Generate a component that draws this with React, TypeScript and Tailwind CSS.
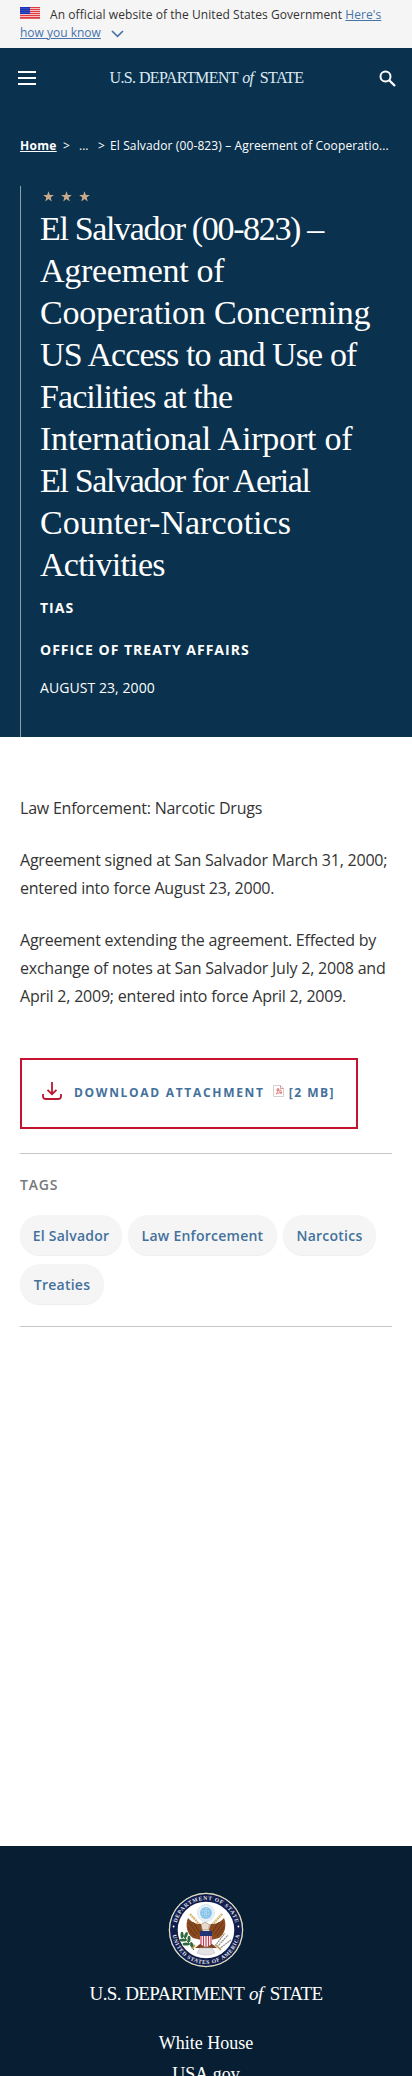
import React from 'react';

const titleLines = [
  { text: 'El Salvador (00-823) –', spacing: 'tracking-[-1.35px]' },
  { text: 'Agreement of', spacing: 'tracking-[-0.3px]' },
  { text: 'Cooperation Concerning', spacing: 'tracking-[-0.22px]' },
  { text: 'US Access to and Use of', spacing: 'tracking-[-0.9px]' },
  { text: 'Facilities at the', spacing: 'tracking-[-0.92px]' },
  { text: 'International Airport of', spacing: 'tracking-[-0.2px]' },
  { text: 'El Salvador for Aerial', spacing: 'tracking-[-1.35px]' },
  { text: 'Counter-Narcotics', spacing: 'tracking-[0.03px]' },
  { text: 'Activities', spacing: 'tracking-[-0.75px]' },
];

const tags = [
  { label: 'El Salvador', width: 'w-[102px]' },
  { label: 'Law Enforcement', width: 'w-[149px]' },
  { label: 'Narcotics', width: 'w-[93px]' },
  { label: 'Treaties', width: 'w-[84px]' },
];

function Flag() {
  return (
    <svg className="block h-3 w-5" viewBox="0 0 20 12">
      <rect width="20" height="12" fill="#f4d9dc" />
      {[0, 2, 4, 6, 8, 10].map((y) => (
        <rect key={y} y={y} width="20" height="1.15" fill="#e0393e" />
      ))}
      <rect y="11.3" width="20" height=".7" fill="#e0393e" />
      <rect width="10" height="7" fill="#1e33b1" />
      {[1, 3, 5].map((y) =>
        [1, 3, 5, 7, 9].map((x) => <circle key={`${x}-${y}`} cx={x} cy={y + 0.3} r=".4" fill="#b9c0ee" />),
      )}
    </svg>
  );
}

function Star() {
  return (
    <svg className="size-[11px]" viewBox="0 0 24 24" fill="#c9ab8c">
      <path d="M12 .5l2.9 8.2 8.8.2-7 5.3 2.5 8.5L12 17.6l-7.200 5.100 2.500-8.500-7-5.300 8.800-.2z" />
    </svg>
  );
}

function Wordmark({ large = false }: { large?: boolean }) {
  return (
    <div
      className={
        large
          ? "whitespace-nowrap font-['Liberation_Serif',serif] text-[19px] leading-6 tracking-[-0.58px] text-white"
          : "mr-[2px] whitespace-nowrap font-['Liberation_Serif',serif] text-[16px] leading-5 tracking-[-0.6px] text-[#dcebf5]"
      }
    >
      U.S. DEPARTMENT <span className="mr-[3px] ml-px italic">of</span> STATE
    </div>
  );
}

function Seal() {
  return (
    <svg className="block size-[76px] shrink-0" viewBox="0 0 76 76">
      <defs>
        <path id="seal-top" d="M7.900 38a30.100 30.100 0 0 1 60.200 0" />
        <path id="seal-bottom" d="M4.100 38a33.900 33.900 0 0 0 67.800 0" />
      </defs>
      <circle cx="38" cy="38" r="37.200" fill="#fff" />
      <circle cx="38" cy="38" r="36.700" fill="none" stroke="#c9bf7d" strokeWidth=".6" />
      <circle cx="38" cy="38" r="36" fill="#111d4a" />
      <circle cx="38" cy="38" r="28.300" fill="#fff" />
      <g fill="#e4e7f1" fontFamily="Liberation Serif, serif" fontSize="5.600" fontWeight="bold">
        <text textLength="80" lengthAdjust="spacing">
          <textPath href="#seal-top" startOffset="50%" textAnchor="middle" textLength="80">DEPARTMENT OF STATE</textPath>
        </text>
        <text textLength="96" lengthAdjust="spacing">
          <textPath href="#seal-bottom" startOffset="50%" textAnchor="middle" textLength="96">UNITED STATES OF AMERICA</textPath>
        </text>
      </g>
      <circle cx="5.600" cy="34.500" r=".9" fill="#fff" />
      <circle cx="70.400" cy="34.500" r=".9" fill="#fff" />
      <circle cx="38" cy="21" r="8.500" fill="#e9f1f7" stroke="#b8cbd8" strokeWidth=".8" strokeDasharray="1 .8" />
      <circle cx="38" cy="21" r="6" fill="#8cc5ea" />
      <path d="M34 19h8M34 22h8M38 16v10" stroke="#d9edf9" strokeWidth=".8" strokeDasharray="1 1" />
      <path d="M22 22l12 13M54 22L42 35" stroke="#d8b56b" strokeWidth="2.200" strokeDasharray="2 .6" fill="none" />
      <path d="M20 26c-3 7-1 16 5 20l8 2 2-11-2-5c-6 0-9-2-13-6z" fill="#8a4a20" />
      <path d="M56 26c3 7 1 16-5 20l-8 2-2-11 2-5c6 0 9-2 13-6z" fill="#8a4a20" />
      <path d="M21 30l8 12M20 35l7 9M25 30l7 11M55 30l-8 12M56 35l-7 9M51 30l-7 11" stroke="#5f2e15" strokeWidth=".8" />
      <path d="M34 38c0-3-2-5 1-7 2-1 4-.5 5 1l3 1-2 1v4z" fill="#e7dccb" stroke="#866447" strokeWidth=".5" />
      <path d="M32 52l-5 4h5l-1 4c4 3 10 3 14 0l-1-4h5l-5-4z" fill="#7d421f" />
      <path d="M32 56h12l3 5q-9 4-18 0z" fill="#e4e2e4" stroke="#b8b5ba" strokeWidth=".5" />
      <path d="M32 39h12v11q-1 4-6 5-5-1-6-5z" fill="#fff" />
      <path d="M33 44v8M35.500 44v10M38 44v11M40.500 44v10M43 44v8" stroke="#c63b52" strokeWidth="1.200" />
      <path d="M32 39h12v5H32z" fill="#223577" />
      <path d="M14 42l12 16" stroke="#345b35" strokeWidth="1" />
      <g fill="#2c6a3c">
        <ellipse cx="14" cy="43" rx="1.500" ry="3.200" />
        <ellipse cx="18" cy="43" rx="1.500" ry="3.200" transform="rotate(20 18 43)" />
        <ellipse cx="15" cy="48" rx="3.400" ry="1.500" />
        <ellipse cx="21" cy="47" rx="1.500" ry="3.200" />
        <ellipse cx="18" cy="52" rx="3.400" ry="1.500" />
        <ellipse cx="24" cy="53" rx="1.500" ry="3.200" transform="rotate(-20 24 53)" />
      </g>
      <path d="M49 55l11-12M51 57l12-9M47 54l10-13" stroke="#918c87" strokeWidth="1.200" strokeDasharray="2 .6" />
      <path d="M48 53l5 5M27 53l-3 4" stroke="#c39a4c" strokeWidth="1.400" />
    </svg>
  );
}

export default function App() {
  return (
    <div className="flex h-[2076px] w-full flex-col overflow-hidden bg-white font-['Open_Sans',sans-serif] text-[#333]">
      <div className="h-12 bg-[#f5f5f5] px-5 pt-[6px] text-[12px] leading-[18px] whitespace-nowrap">
        <div className="flex">
          <span className="mr-[10px] pt-px"><Flag /></span>
          <span className="tracking-[0.07px]">An official website of the United States Government <a className="text-[#4773aa] underline">Here's</a></span>
        </div>
        <div className="flex items-center text-[#4773aa]">
          <a className="underline">how you know</a>
          <svg className="mt-px ml-[10px] h-[8px] w-[13px]" viewBox="0 0 13 8" fill="none" stroke="currentColor" strokeWidth="1.7">
            <path d="M1 1l5.500 5.300L12 1" />
          </svg>
        </div>
      </div>

      <header className="h-[689px] bg-[#0a314d] text-white">
        <div className="flex h-[60px] items-center justify-between pr-[16px] pl-[18px]">
          <div className="flex h-[14px] w-[18px] flex-col justify-between">
            <span className="h-[2px] bg-white" />
            <span className="h-[2px] bg-white" />
            <span className="h-[2px] bg-white" />
          </div>
          <Wordmark />
          <svg className="size-[17px]" viewBox="0 0 17 17" fill="none" stroke="white" strokeWidth="2">
            <circle cx="6.500" cy="6.500" r="5" />
            <path d="M10.200 10.200l5.800 5.800" strokeWidth="2.300" />
          </svg>
        </div>
        <nav className="mt-[29px] flex h-[18px] items-center px-5 text-[12px] leading-[18px] whitespace-nowrap">
          <a className="w-[43px] font-bold tracking-[0.3px] underline">Home</a>
          <span className="w-[16px]">&gt;</span>
          <span className="w-[19px]">...</span>
          <span className="w-[12px]">&gt;</span>
          <span className="tracking-[0.12px]">El Salvador (00-823) – Agreement of Cooperatio...</span>
        </nav>
        <section className="mt-[31px] ml-5 h-[551px] border-l border-[#8d9fa6] pl-[19px]">
          <div className="flex h-[20px] items-center gap-[7px] pl-[3px]">
            <Star /><Star /><Star />
          </div>
          <h1 className="mt-[2px] font-['Liberation_Serif',serif] text-[34px] leading-[42px] whitespace-nowrap">
            {titleLines.map((line) => (
              <span key={line.text} className={`block ${line.spacing}`}>{line.text}</span>
            ))}
          </h1>
          <p className="mt-[12px] text-[14px] leading-5 font-bold tracking-[1px]">TIAS</p>
          <p className="mt-[22px] text-[14px] leading-5 font-bold tracking-[1px]">OFFICE OF TREATY AFFAIRS</p>
          <p className="mt-[18px] text-[14px] leading-5 tracking-[0.07px]">AUGUST 23, 2000</p>
        </section>
      </header>

      <main className="px-5 pt-[57px]">
        <div className="flex flex-col gap-6 text-[16px] leading-7 tracking-[-0.22px] whitespace-nowrap">
          <p>Law Enforcement: Narcotic Drugs</p>
          <p>Agreement signed at San Salvador March 31, 2000;<br />entered into force August 23, 2000.</p>
          <p>Agreement extending the agreement. Effected by<br />exchange of notes at San Salvador July 2, 2008 and<br />April 2, 2009; entered into force April 2, 2009.</p>
        </div>
        <a className="mt-[48px] flex h-[71px] w-[338px] items-start border-2 border-[#c41230] pt-[22px] pl-[20px] whitespace-nowrap text-[#43719c]">
          <svg className="mr-[12px] h-[18px] w-5" viewBox="0 0 20 18" fill="none" stroke="#b71931" strokeWidth="1.8">
            <path d="M10 0v12M5.500 7.800L10 12.200l4.500-4.400M1 12v2.200Q1 17 4 17h12q3 0 3-2.800V12" />
          </svg>
          <span className="text-[12px] leading-[22px] font-bold tracking-[1.7px]">DOWNLOAD ATTACHMENT</span>
          <svg className="mt-[3px] mr-[5px] ml-[8px] h-3 w-[11px]" viewBox="0 0 11 12" fill="none">
            <path d="M.5.500h7l3 3v8H.500z" fill="#fff" stroke="#d5cfcf" />
            <path d="M7.500.500v3h3" stroke="#d99" />
            <path d="M3 9c2-2 2-4 2-6 0 3 2 5 4 5-2-.5-4 0-6 1zM3 5h5v4" stroke="#d9706a" strokeWidth=".8" />
          </svg>
          <span className="text-[12px] leading-[22px] font-bold tracking-[1.5px]">[2 MB]</span>
        </a>
        <section className="mt-[24px] h-[174px] w-[372px] border-y border-[#c4c8cb] pt-[21px]">
          <h2 className="text-[14px] leading-5 font-semibold tracking-[0.8px] text-[#77797b]">TAGS</h2>
          <div className="mt-[20px] flex flex-wrap gap-x-[6px] gap-y-[9px]">
            {tags.map((tag) => (
              <a key={tag.label} className={`flex h-10 items-center justify-center rounded-full bg-[#f5f5f5] text-[14px] font-semibold tracking-[0.25px] whitespace-nowrap text-[#43719c] shadow-[0_1px_1px_#eeeeee] ${tag.width}`}>
                {tag.label}
              </a>
            ))}
          </div>
        </section>
      </main>

      <footer className="mt-auto flex h-[230px] shrink-0 flex-col items-center bg-[#081f33] pt-[46px] text-white">
        <Seal />
        <div className="mt-[14px] shrink-0"><Wordmark large /></div>
        <div className="mt-[22px] flex shrink-0 flex-col items-center font-['Liberation_Serif',serif] text-[18px] leading-[31px]">
          <a>White House</a>
          <a>USA.gov</a>
        </div>
      </footer>
    </div>
  );
}
